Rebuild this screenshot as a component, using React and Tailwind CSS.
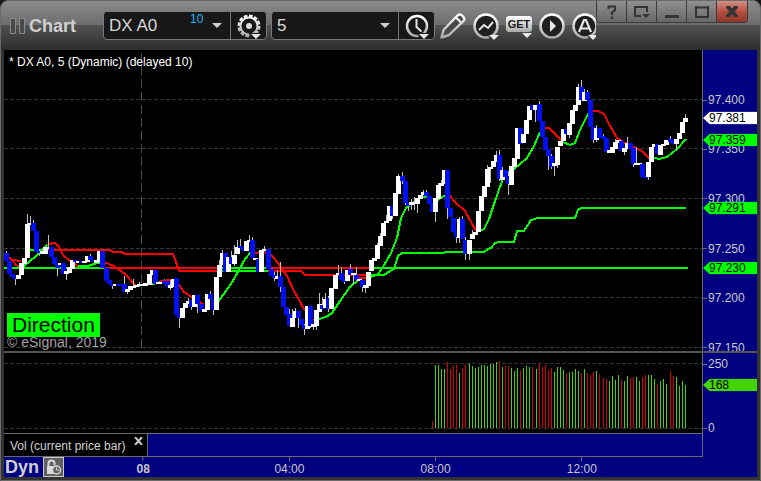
import { useState } from "react"
import clsx from "clsx"

const PLOT = { left: 4, width: 698 }
const PRICE = { top: 50, height: 301 }
const VOLUME = { top: 353, height: 80 }

const UP = "#ffffff"
const DOWN = "#0010f0"
const GREEN = "#00ff00"
const RED = "#ff0000"

// [x, open, close, high, low] in canvas units. high / low are left out when
// the bar has no wick. Smaller is higher, so close < open is a rising bar.
const candles = [
	[6, 253, 261, 251],
	[9, 261, 274],
	[12, 274, 277],
	[15, 276, 279, 276, 285],
	[18, 279, 275],
	[21, 275, 263],
	[24, 264, 258],
	[27, 258, 224, 214],
	[30, 225, 223, 216],
	[33, 223, 231, 220],
	[36, 231, 252],
	[39, 251, 253, 249, 256],
	[42, 254, 251],
	[45, 254, 247],
	[48, 249, 247, 235],
	[51, 247, 257],
	[54, 257, 264],
	[57, 264, 268, 264, 276],
	[60, 265, 263],
	[63, 263, 274],
	[66, 274, 271, 271, 280],
	[69, 273, 267],
	[72, 269, 260],
	[75, 260, 262],
	[78, 263, 261],
	[81, 261, 263],
	[84, 263, 261],
	[87, 262, 256],
	[90, 256, 260, 254],
	[93, 260, 262],
	[96, 263, 260],
	[99, 262, 251],
	[102, 251, 268],
	[106, 268, 281],
	[109, 280, 284],
	[112, 284, 286, 284, 289],
	[115, 286, 284],
	[118, 284, 286],
	[121, 284, 285],
	[124, 284, 292, 276],
	[127, 292, 289, 289, 294],
	[130, 290, 286],
	[133, 288, 286, 279],
	[136, 287, 285],
	[139, 286, 284, 282],
	[142, 286, 284],
	[145, 286, 283],
	[149, 285, 274],
	[152, 275, 270],
	[155, 270, 284],
	[158, 284, 282],
	[161, 284, 282],
	[164, 281, 284],
	[167, 281, 287],
	[170, 288, 285, 280, 290],
	[173, 287, 279],
	[176, 278, 315],
	[179, 314, 318, 314, 328],
	[182, 318, 308],
	[185, 308, 303],
	[188, 304, 301, 298],
	[191, 300, 307, 300, 310],
	[194, 307, 295],
	[197, 295, 304, 295, 313],
	[201, 304, 311],
	[204, 312, 309],
	[207, 310, 294],
	[210, 294, 299, 291],
	[213, 299, 310, 299, 315],
	[216, 310, 277],
	[219, 277, 265, 260],
	[222, 265, 253, 250],
	[225, 253, 272],
	[228, 272, 257],
	[231, 257, 264, 251],
	[234, 264, 255, 245, 266],
	[237, 254, 247, 240],
	[240, 246, 248, 239],
	[243, 247, 251],
	[246, 251, 241],
	[249, 242, 240, 235],
	[252, 240, 258, 237],
	[255, 260, 258],
	[258, 259, 272],
	[261, 272, 250],
	[264, 251, 249, 246],
	[268, 249, 269],
	[271, 269, 276],
	[274, 275, 278, 272, 281],
	[277, 279, 276, 270],
	[280, 276, 287, 262, 292],
	[283, 287, 307],
	[286, 307, 315],
	[289, 314, 326, 309],
	[292, 327, 318, 309],
	[295, 318, 311, 308],
	[298, 311, 318, 311, 328],
	[301, 319, 325],
	[304, 325, 329, 324, 335],
	[307, 329, 306],
	[310, 306, 326, 306, 328],
	[313, 327, 324, 324, 330],
	[316, 326, 310, 310, 330],
	[319, 312, 304, 293],
	[322, 305, 309, 297],
	[325, 308, 299, 293],
	[328, 298, 309, 296, 312],
	[331, 309, 288],
	[335, 289, 275],
	[338, 275, 273, 265],
	[341, 273, 280, 267],
	[344, 279, 282, 279, 284],
	[347, 281, 270],
	[350, 269, 275, 264],
	[353, 275, 273, 273, 285],
	[356, 275, 280, 267],
	[359, 281, 279],
	[362, 280, 287, 280, 292],
	[365, 288, 285, 285, 293],
	[368, 286, 272, 272, 288],
	[371, 271, 260],
	[374, 261, 258],
	[377, 259, 245, 243],
	[380, 246, 236, 233],
	[383, 236, 223],
	[386, 223, 221, 215],
	[389, 221, 206],
	[392, 206, 216, 206, 219],
	[395, 216, 193],
	[398, 194, 176, 174],
	[402, 176, 181, 172, 184],
	[405, 181, 203, 181, 205],
	[408, 203, 206, 203, 211],
	[411, 205, 202, 199, 210],
	[414, 204, 202, 197, 210],
	[417, 204, 198, 198, 213],
	[420, 199, 195],
	[423, 195, 192, 190],
	[426, 192, 196, 190],
	[429, 196, 204],
	[432, 203, 212],
	[435, 212, 198, 198, 222],
	[438, 199, 185, 183],
	[441, 186, 183, 180],
	[444, 184, 170],
	[447, 170, 208, 170, 219],
	[450, 208, 217],
	[453, 218, 232],
	[456, 230, 237, 230, 243],
	[459, 238, 219, 217, 243],
	[462, 219, 239, 216],
	[465, 240, 254, 237, 260],
	[469, 254, 240, 240, 260],
	[472, 239, 234, 230],
	[475, 235, 232],
	[478, 232, 211],
	[481, 211, 196],
	[484, 197, 186],
	[487, 187, 169, 165],
	[490, 169, 167, 167, 183],
	[493, 167, 161],
	[496, 162, 155, 151],
	[499, 155, 179, 150, 181],
	[502, 180, 170, 167],
	[505, 170, 177],
	[508, 176, 184, 172, 195],
	[511, 185, 166],
	[514, 167, 158],
	[517, 159, 128],
	[520, 128, 144],
	[523, 143, 134],
	[526, 134, 120],
	[529, 120, 106],
	[532, 105, 110],
	[535, 110, 105, 105, 122],
	[539, 104, 121, 101],
	[542, 121, 137],
	[545, 137, 150],
	[548, 149, 156, 149, 170],
	[551, 156, 167, 154, 169],
	[554, 166, 163, 163, 176],
	[557, 165, 147, 147, 168],
	[560, 146, 141],
	[563, 141, 129],
	[566, 129, 134],
	[569, 135, 123, 123, 138],
	[572, 124, 110],
	[575, 111, 105],
	[578, 105, 87, 84],
	[581, 87, 100, 80],
	[584, 101, 92, 89],
	[587, 92, 100, 90],
	[590, 100, 127],
	[593, 127, 140, 127, 143],
	[596, 140, 128, 125, 142],
	[599, 128, 138],
	[603, 136, 139, 134],
	[606, 138, 152],
	[609, 153, 150],
	[612, 153, 147],
	[615, 149, 142, 139],
	[618, 143, 140],
	[621, 141, 151],
	[624, 152, 148, 148, 155],
	[627, 149, 143, 137],
	[630, 143, 149],
	[633, 148, 164, 148, 167],
	[636, 165, 163, 147],
	[639, 165, 163],
	[642, 164, 177],
	[645, 176, 178],
	[648, 177, 162, 162, 180],
	[651, 162, 147],
	[654, 147, 144],
	[657, 144, 154],
	[660, 155, 145],
	[663, 146, 144],
	[666, 145, 140],
	[670, 139, 142, 136],
	[673, 140, 144],
	[676, 144, 139, 139, 150],
	[679, 139, 133],
	[682, 133, 122],
	[685, 122, 118, 114],
]

// Moving average and the two session levels, one entry per colour run.
const overlays = [
	{ color: GREEN, points: "4,268 104,268" },
	{ color: RED, points: "104,268 222,268" },
	{ color: GREEN, points: "222,268 268,268" },
	{ color: RED, points: "268,268 370,268" },
	{ color: GREEN, points: "370,268 688,268" },
	{ color: GREEN, points: "30,250 46,250" },
	{
		color: RED,
		points:
			"46,250 110,250 113,252 122,252 125,254 173,254 175,259 178,268 180,271 222,271",
	},
	{ color: GREEN, points: "222,271 268,271" },
	{ color: RED, points: "268,271 301,271 305,275 370,275" },
	{
		color: GREEN,
		points:
			"370,275 384,275 390,271 394,269 398,256 402,253 443,253 446,252 484,252 488,249 491,248 495,243 499,242 514,242 517,231 524,231 531,220 538,218 575,218 578,210 581,208 686,208",
	},
	{ color: RED, points: "8,257 13,260 21,261" },
	{ color: RED, points: "12,260 16,265 20,267" },
	{ color: GREEN, points: "23,267 30,261 36,256 42,250 47,245" },
	{
		color: RED,
		points: "48,244 55,243 59,247 63,255 70,261 76,265 80,267",
	},
	{ color: GREEN, points: "78,266 88,266 97,263 104,262" },
	{ color: RED, points: "104,262 114,266 125,274 135,285" },
	{ color: GREEN, points: "136,286 152,284 158,283 165,280" },
	{ color: RED, points: "160,281 173,280 179,285 184,292 192,297 204,305" },
	{
		color: GREEN,
		points: "216,305 220,299 231,284 239,270 245,259 251,252",
	},
	{
		color: RED,
		points: "252,253 264,252 271,255 279,264 287,276 294,291 304,309 313,320",
	},
	{
		color: GREEN,
		points: "319,319 326,317 332,313 340,301 350,287 358,280",
	},
	{ color: RED, points: "357,278 370,278" },
	{
		color: GREEN,
		points:
			"371,277 378,274 383,267 391,253 397,238 401,218 406,208 414,202 421,198 428,196",
	},
	{ color: GREEN, points: "436,201 442,197 446,195" },
	{ color: RED, points: "448,194 456,203 465,211 471,222 476,231" },
	{
		color: GREEN,
		points:
			"477,232 484,229 489,219 495,201 501,184 505,174 514,169 520,164 527,158 534,146 540,132",
	},
	{ color: RED, points: "543,128 549,128 557,136 562,141" },
	{ color: GREEN, points: "563,142 570,145 575,143 580,130 589,112" },
	{
		color: RED,
		points:
			"591,111 598,111 604,114 609,124 617,138 623,142 634,147 642,151 650,159",
	},
	{ color: GREEN, points: "651,157 659,159 667,157 677,149 686,139" },
]

// Bar heights from 08:00 on, negative for a falling bar.
const volumes = [
	-7, 63, 63, 59, 59, -66, -59, -63, -63, 55, -60, -64, 65, 62, 60, 61, 63, 63,
	62, 64, 64, 66, -67, 61, -62, -62, 60, 57, 60, -58, 60, 62, 61, -61, 59, -64,
	-61, -63, -58, -60, 56, 61, 61, 58, -55, 56, 56, 59, 57, -55, 59, -55, -53,
	-56, 57, -54, -50, -49, 47, 52, 48, 53, -49, 47, 52, -50, -51, 51, 47, -51,
	-53, 53, 53, 49, -44, 47, 49, 44, -57, -52, 51, 42, 47, 43,
]

const priceTicks = [
	{ label: "97.400", y: 100 },
	{ label: "97.350", y: 149 },
	{ label: "97.300", y: 199 },
	{ label: "97.250", y: 249 },
	{ label: "97.200", y: 298 },
	{ label: "97.150", y: 348 },
]

const priceTags = [
	{ label: "97.381", y: 118, className: "bg-white" },
	{ label: "97.359", y: 140, className: "bg-[#00ff00]" },
	{ label: "97.291", y: 208, className: "bg-[#00ff00]" },
	{ label: "97.230", y: 268, className: "bg-[#00ff00]" },
]

const volumeTicks = [
	{ label: "250", y: 364 },
	{ label: "0", y: 428 },
]

const volumeTags = [{ label: "168", y: 385, className: "bg-[#44d400]" }]

const timeTicks = [
	{ label: "08", x: 143, bold: true },
	{ label: "04:00", x: 289 },
	{ label: "08:00", x: 435 },
	{ label: "12:00", x: 581 },
]

const barX = (index) => 432 + index * 3 + Math.floor((index + 10) / 22)

function GridLine({ y }) {
	return (
		<line
			x1="4"
			x2="702"
			y1={y - 0.5}
			y2={y - 0.5}
			stroke="#333333"
			strokeDasharray="4 2"
		/>
	)
}

function PriceChart() {
	return (
		<svg
			className="block h-full w-full"
			viewBox={`${PLOT.left} ${PRICE.top} ${PLOT.width} ${PRICE.height}`}
			preserveAspectRatio="none"
			shapeRendering="crispEdges"
			role="img"
			aria-label="Price chart"
		>
			{priceTicks.map(({ y }) => (
				<GridLine key={y} y={y} />
			))}
			<line
				x1="141.5"
				x2="141.5"
				y1="50"
				y2="351"
				stroke="#4a4a4a"
				strokeDasharray="9 4"
				strokeDashoffset="-3"
			/>
			{overlays.map(({ color, points }) => (
				<polyline
					key={points}
					points={points}
					fill="none"
					stroke={color}
					strokeWidth="2"
				/>
			))}
			{candles.map(([x, open, close, high, low]) => {
				const top = Math.min(open, close)
				const bottom = Math.max(open, close)
				const wickTop = high ?? top
				const wickBottom = low ?? bottom
				return (
					<g key={x}>
						<rect
							x={x}
							y={wickTop}
							width="1"
							height={wickBottom - wickTop}
							fill="#c0c0c0"
						/>
						<rect
							x={x - 2}
							y={top}
							width="5"
							height={bottom - top}
							fill={close < open ? UP : DOWN}
						/>
					</g>
				)
			})}
		</svg>
	)
}

function VolumeChart() {
	return (
		<svg
			className="block h-full w-full"
			viewBox={`${PLOT.left} ${VOLUME.top} ${PLOT.width} ${VOLUME.height}`}
			preserveAspectRatio="none"
			shapeRendering="crispEdges"
			role="img"
			aria-label="Volume chart"
		>
			<GridLine y={364} />
			<GridLine y={429} />
			{volumes.map((value, index) => (
				<rect
					key={index}
					x={barX(index)}
					y={428 - Math.abs(value)}
					width="1"
					height={Math.abs(value)}
					fill={value < 0 ? "#d80000" : "#44d400"}
				/>
			))}
		</svg>
	)
}

function Axis({ range, ticks, tags }) {
	const position = (y) => ({
		top: `${((y - range.top) / range.height) * 100}%`,
	})

	return (
		<div className="relative h-full w-[55px] shrink-0 overflow-hidden border-l border-[#6a6a6a] bg-[#000080] text-xs">
			{ticks.map(({ label, y }) => (
				<div
					key={label}
					style={position(y)}
					className="absolute inset-x-0 flex -translate-y-1/2 items-center gap-px leading-[10px] text-[#c8c8c8]"
				>
					<span className="h-px w-1 bg-[#6a6a6a]" />
					{label}
				</div>
			))}
			{tags.map(({ label, y, className }) => (
				<div
					key={label}
					style={position(y)}
					className={clsx(
						"absolute inset-x-0 h-[13px] -translate-y-1/2 pl-1.5 leading-[13px] text-black [clip-path:polygon(0_50%,7px_0,100%_0,100%_100%,7px_100%)]",
						className
					)}
				>
					{label}
				</div>
			))}
		</div>
	)
}

function Caret({ x, y }) {
	return <path d={`M${x} ${y}h10l-5 5z`} fill="#e8e8e8" />
}

function IconSvg({ children }) {
	return (
		<svg width="28" height="30" viewBox="0 0 28 30" aria-hidden="true">
			{children}
		</svg>
	)
}

function Disc() {
	return (
		<circle
			cx="14"
			cy="15"
			r="11.5"
			fill="#202020"
			stroke="url(#metal)"
			strokeWidth="2.5"
		/>
	)
}

function GearIcon() {
	return (
		<IconSvg>
			<circle
				cx="14"
				cy="15"
				r="8.5"
				fill="none"
				stroke="url(#metal)"
				strokeWidth="2"
			/>
			<circle
				cx="14"
				cy="15"
				r="10"
				fill="none"
				stroke="url(#metal)"
				strokeWidth="3"
				strokeDasharray="3.6 1.6"
			/>
			<circle cx="14" cy="15" r="3" fill="#dddddd" />
			<path d="M14 22h14v8H18z" fill="#181818" />
			<Caret x={16} y={23} />
		</IconSvg>
	)
}

function ClockIcon() {
	return (
		<IconSvg>
			<circle
				cx="14"
				cy="15"
				r="10"
				fill="none"
				stroke="url(#metal)"
				strokeWidth="2.5"
			/>
			<path
				d="M13.5 8v8l5 4.5"
				fill="none"
				stroke="#e4e4e4"
				strokeWidth="2"
			/>
			<path d="M14 22h14v8H18z" fill="#181818" />
			<Caret x={16} y={23} />
		</IconSvg>
	)
}

function PencilIcon() {
	return (
		<IconSvg>
			<path
				d="M2.5 26.5 4.5 19 18.5 4.500Q21 2.500 23.500 5Q26.500 7.500 24.500 10L10 24ZM17 6.500l5.500 5.500"
				fill="#4a4a4a"
				stroke="url(#metal)"
				strokeWidth="2.4"
				strokeLinejoin="round"
			/>
		</IconSvg>
	)
}

function StudyIcon() {
	return (
		<IconSvg>
			<Disc />
			<path
				d="M7 19l5-5 4 3 5-6"
				fill="none"
				stroke="#e8e8e8"
				strokeWidth="2"
			/>
			<path d="M16 24h12v6H19z" fill="#3a3a3a" />
			<Caret x={17} y={24} />
		</IconSvg>
	)
}

function GetIcon() {
	return (
		<IconSvg>
			<rect x="1" y="5" width="26" height="16" rx="3" fill="url(#metal)" />
			<text
				x="14"
				y="17"
				textAnchor="middle"
				fontSize="11"
				fontWeight="bold"
				fontFamily="Liberation Sans, Arial, sans-serif"
				fill="#202020"
			>
				GET
			</text>
			<path d="M16 21h12l-6 7z" fill="#4a4a4a" />
			<Caret x={17} y={22} />
		</IconSvg>
	)
}

function PlayIcon() {
	return (
		<IconSvg>
			<Disc />
			<path d="M12 9v12l6-6z" fill="#e8e8e8" />
		</IconSvg>
	)
}

function AlertIcon() {
	return (
		<IconSvg>
			<Disc />
			<path
				d="M8 21l5-12h2l5 12M10 17.500h8"
				fill="none"
				stroke="#e8e8e8"
				strokeWidth="2.2"
			/>
			<path d="M16 24h12v6H19z" fill="#3a3a3a" />
			<Caret x={17} y={24} />
		</IconSvg>
	)
}

const tools = [
	{ name: "Draw", Icon: PencilIcon },
	{ name: "Studies", Icon: StudyIcon },
	{ name: "GET", Icon: GetIcon },
	{ name: "Playback", Icon: PlayIcon },
	{ name: "Alerts", Icon: AlertIcon },
]

function Toolbar() {
	const [symbol, setSymbol] = useState("DX A0")

	return (
		<div className="flex min-w-0 flex-1 items-center overflow-hidden">
			<div className="flex w-[102px] shrink-0 items-center gap-[3px] pl-[9px]">
				<svg width="16" height="16" viewBox="0 0 16 16" aria-hidden="true">
					<path
						d="M.5.500h5v15h-5zM9.500.500h5v15h-5z"
						fill="#4a4a4a"
						stroke="#8a8a8a"
					/>
				</svg>
				<h1 className="text-lg leading-6 font-bold text-[#d0d0d0]">Chart</h1>
			</div>
			<div className="flex h-[29px] shrink-0 overflow-hidden rounded border border-[#7a7a7a] bg-[#181818]">
				<input
					aria-label="Symbol"
					value={symbol}
					onChange={(event) => setSymbol(event.target.value)}
					className="w-[86px] bg-transparent pl-[5px] text-[17px] text-[#d8d8d8] outline-none"
				/>
				<span className="w-[14px] pt-px text-xs leading-3 text-[#22b4f0]">
					10
				</span>
				<button
					type="button"
					aria-label="Recent symbols"
					className="flex w-[26px] items-center justify-center"
				>
					<svg width="10" height="5" viewBox="0 0 10 5">
						<path d="M0 0h10L5 5z" fill="#d0d0d0" />
					</svg>
				</button>
				<button
					type="button"
					aria-label="Symbol settings"
					className="flex w-9 items-center justify-center border-l border-[#7a7a7a]"
				>
					<GearIcon />
				</button>
			</div>
			<div className="ml-1 flex h-[29px] shrink-0 overflow-hidden rounded border border-[#7a7a7a] bg-[#181818]">
				<div className="relative w-[126px]">
					<select
						aria-label="Interval"
						className="h-full w-full appearance-none bg-transparent pl-[5px] text-[17px] text-[#d8d8d8] outline-none"
					>
						<option>5</option>
					</select>
					<svg
						className="pointer-events-none absolute top-[11px] right-2"
						width="10"
						height="5"
						viewBox="0 0 10 5"
					>
						<path d="M0 0h10L5 5z" fill="#d0d0d0" />
					</svg>
				</div>
				<button
					type="button"
					aria-label="Time template"
					className="flex w-9 items-center justify-center border-l border-[#7a7a7a]"
				>
					<ClockIcon />
				</button>
			</div>
			<div className="ml-1 flex shrink-0 gap-[5px]">
				{tools.map(({ name, Icon }) => (
					<button key={name} type="button" aria-label={name}>
						<Icon />
					</button>
				))}
			</div>
		</div>
	)
}

function WindowButtons() {
	const base =
		"flex w-[30px] items-center justify-center border-r border-[#3a3a3a] last:border-r-0"
	const plain = "bg-linear-to-b from-[#909090] to-[#686868]"

	return (
		<div className="flex h-[22px] shrink-0 self-start overflow-hidden rounded-b border border-t-0 border-[#3a3a3a]">
			<button type="button" aria-label="Help" className={clsx(base, plain)}>
				<svg width="12" height="14" viewBox="0 0 12 14">
					<path
						d="M2.500 4V1.500h6.500V5L6 7.500V10M6 11.500V14"
						fill="none"
						stroke="#333333"
						strokeWidth="2"
					/>
				</svg>
			</button>
			<button
				type="button"
				aria-label="Window menu"
				className={clsx(base, plain)}
			>
				<svg width="16" height="14" viewBox="0 0 16 14">
					<path
						d="M7 11H1V2h12v5M0 2h14"
						fill="none"
						stroke="#333333"
						strokeWidth="2"
					/>
					<path d="M8 9h8l-4 4z" fill="#333333" />
				</svg>
			</button>
			<button type="button" aria-label="Minimize" className={clsx(base, plain)}>
				<svg width="14" height="14" viewBox="0 0 14 14">
					<path d="M0 10h14v3H0z" fill="#333333" />
				</svg>
			</button>
			<button type="button" aria-label="Maximize" className={clsx(base, plain)}>
				<svg width="14" height="12" viewBox="0 0 14 12">
					<path
						d="M1 0v11h12V0M0 1.500h14"
						fill="none"
						stroke="#333333"
						strokeWidth="2"
					/>
				</svg>
			</button>
			<button
				type="button"
				aria-label="Close"
				className={clsx(
					base,
					"bg-linear-to-b from-[#d09088] via-[#b85040] to-[#903828]"
				)}
			>
				<svg width="14" height="11" viewBox="0 0 14 11">
					<path
						d="M2 0l10 11M12 0L2 11"
						fill="none"
						stroke="#333333"
						strokeWidth="4"
					/>
				</svg>
			</button>
		</div>
	)
}

function TimeAxis() {
	return (
		<div className="relative flex h-5 flex-1 items-center gap-1 pl-px">
			<span className="text-lg leading-5 font-bold text-[#d0d0d0]">Dyn</span>
			<button
				type="button"
				aria-label="Lock time template"
				className="border border-[#c8c8c8] bg-[#606060]"
			>
				<svg width="19" height="18" viewBox="0 0 19 18">
					<path
						d="M4.500 9V5.500a3 3 0 0 1 6 0V7"
						fill="none"
						stroke="#d8d8d8"
						strokeWidth="2"
					/>
					<path d="M3 8h7v8H3z" fill="#d8d8d8" />
					<circle
						cx="12.500"
						cy="12"
						r="4"
						fill="#606060"
						stroke="#d8d8d8"
						strokeWidth="1.500"
					/>
					<path d="M12.500 9.500V12h2.500" fill="none" stroke="#d8d8d8" />
				</svg>
			</button>
			{timeTicks.map(({ label, x, bold }) => (
				<div
					key={label}
					style={{ left: `${((x - PLOT.left) / PLOT.width) * 100}%` }}
					className="absolute top-0 flex -translate-x-1/2 flex-col items-center"
				>
					<span className="h-1 w-px bg-[#6a6a6a]" />
					<span
						className={clsx(
							"text-xs leading-4 text-[#c8c8c8]",
							bold && "font-bold"
						)}
					>
						{label}
					</span>
				</div>
			))}
		</div>
	)
}

export default function App() {
	return (
		<div className="h-screen bg-[#181818] font-['Liberation_Sans',Arial,sans-serif]">
			<svg className="absolute h-0 w-0" aria-hidden="true">
				<linearGradient id="metal" x1="0" y1="0" x2="0" y2="1">
					<stop offset="0" stopColor="#ffffff" />
					<stop offset="1" stopColor="#aaaaaa" />
				</linearGradient>
			</svg>
			<div className="flex h-full flex-col overflow-hidden rounded-t-lg border border-[#6a6a6a] bg-[#333333]">
				<header className="flex h-[49px] shrink-0 bg-[linear-gradient(to_bottom,#8c8c8c,#6c6c6c_49%,#525252_50%,#2c2c2c)] pr-3">
					<Toolbar />
					<WindowButtons />
				</header>

				<main className="mx-[3px] mb-[3px] flex min-h-0 flex-1 flex-col bg-black">
					<section className="flex min-h-0 flex-1">
						<div className="relative min-w-0 flex-1">
							<PriceChart />
							<p className="absolute top-1 left-[5px] text-xs leading-4 text-white">
								* DX A0, 5 (Dynamic) (delayed 10)
							</p>
							<div className="absolute bottom-0 left-[3px] flex flex-col items-start">
								<p className="bg-[#00ff00] px-[5px] text-[21px] leading-6 text-black">
									Direction
								</p>
								<p className="-mt-1 text-sm leading-[18px] text-[#a0a0a0]">
									© eSignal, 2019
								</p>
							</div>
						</div>
						<Axis range={PRICE} ticks={priceTicks} tags={priceTags} />
					</section>

					<div className="h-0.5 shrink-0 bg-[#555555]" />

					<section className="flex h-20 shrink-0">
						<div className="min-w-0 flex-1">
							<VolumeChart />
						</div>
						<Axis range={VOLUME} ticks={volumeTicks} tags={volumeTags} />
					</section>

					<footer className="shrink-0 bg-[#000080]">
						<div className="flex h-6">
							<div className="flex flex-1 border-t border-r border-b border-[#6a6a6a]">
								<div className="flex w-[144px] items-start justify-between border-r border-[#6a6a6a] bg-black pr-1 pl-1.5">
									<span className="pt-1 text-xs leading-4 text-[#d0d0d0]">
										Vol (current price bar)
									</span>
									<button
										type="button"
										aria-label="Close volume study"
										className="pt-[3px]"
									>
										<svg
											className="block"
											width="9"
											height="8"
											viewBox="0 0 9 8"
										>
											<path
												d="M1 0l7 8M8 0L1 8"
												fill="none"
												stroke="#c8c8c8"
												strokeWidth="2"
											/>
										</svg>
									</button>
								</div>
							</div>
							<div className="w-[54px] shrink-0" />
						</div>
						<div className="flex">
							<TimeAxis />
							<div className="w-[54px] shrink-0" />
						</div>
					</footer>
				</main>
			</div>
		</div>
	)
}
